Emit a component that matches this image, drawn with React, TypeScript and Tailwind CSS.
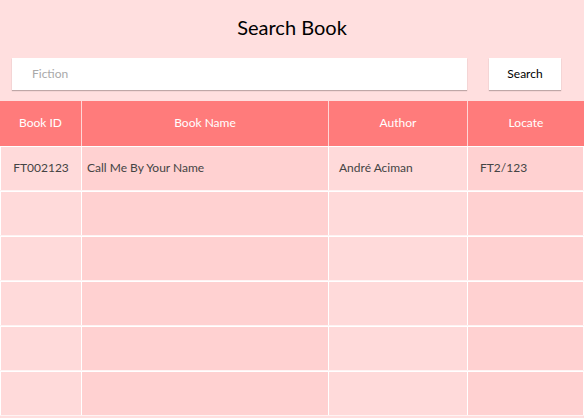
import React from "react";

const rows = [
  ["FT002123", "Call Me By Your Name", "André Aciman", "FT2/123"],
  ["", "", "", ""],
  ["", "", "", ""],
  ["", "", "", ""],
  ["", "", "", ""],
  ["", "", "", ""],
];

export default function App() {
  return (
    <div
      className="w-[584px] h-[418px] overflow-hidden bg-[#ffdfdf] flex flex-col"
      style={{ fontFamily: 'Lato, "Noto Sans", sans-serif' }}
    >
      <div className="pt-[13px] h-[42px] text-center text-[20px] leading-[28px] text-black">
        Search Book
      </div>
      <div className="mt-[16px] flex items-center pl-[12px]">
        <div className="w-[455px] h-[32px] bg-white shadow-[0_1px_1px_rgba(0,0,0,0.25)] flex items-center pl-[20px] pb-[1px] text-[12px] text-[#a9a9a9]">
          Fiction
        </div>
        <button className="ml-[22px] w-[72px] h-[32px] bg-white shadow-[0_1px_1px_rgba(0,0,0,0.25)] text-[12px] text-black pb-[1px]">
          Search
        </button>
      </div>
      <div className="mt-[11px] flex h-[45px] bg-[#ff7b7b] text-white text-[12px] pb-[2px]">
        <div className="w-[81px] flex items-center justify-center">Book ID</div>
        <div className="w-[1px] bg-[#ffd6d6] -mb-[2px]" />
        <div className="w-[246px] flex items-center justify-center">Book Name</div>
        <div className="w-[1px] bg-[#ffd6d6] -mb-[2px]" />
        <div className="w-[138px] flex items-center justify-center">Author</div>
        <div className="w-[1px] bg-[#ffd6d6] -mb-[2px]" />
        <div className="w-[116px] flex items-center justify-center">Locate</div>
      </div>
      <div className="flex flex-col bg-white text-[12px] text-[#444]">
        {rows.map((r, i) => (
          <div key={i} className="flex h-[45px] pt-[1px] pl-[1px] gap-[1px] border-b border-[#fff3f3]">
            <div className="w-[80px] bg-[#ffdada] flex items-center justify-center pb-[1px]">{r[0]}</div>
            <div className="w-[246px] bg-[#ffd1d1] flex items-center pl-[5px] pb-[1px]">{r[1]}</div>
            <div className="w-[138px] bg-[#ffdada] flex items-center pl-[10px] pb-[1px]">{r[2]}</div>
            <div className="w-[115px] bg-[#ffd1d1] flex items-center pl-[12px] pb-[1px]">{r[3]}</div>
          </div>
        ))}
      </div>
    </div>
  );
}
